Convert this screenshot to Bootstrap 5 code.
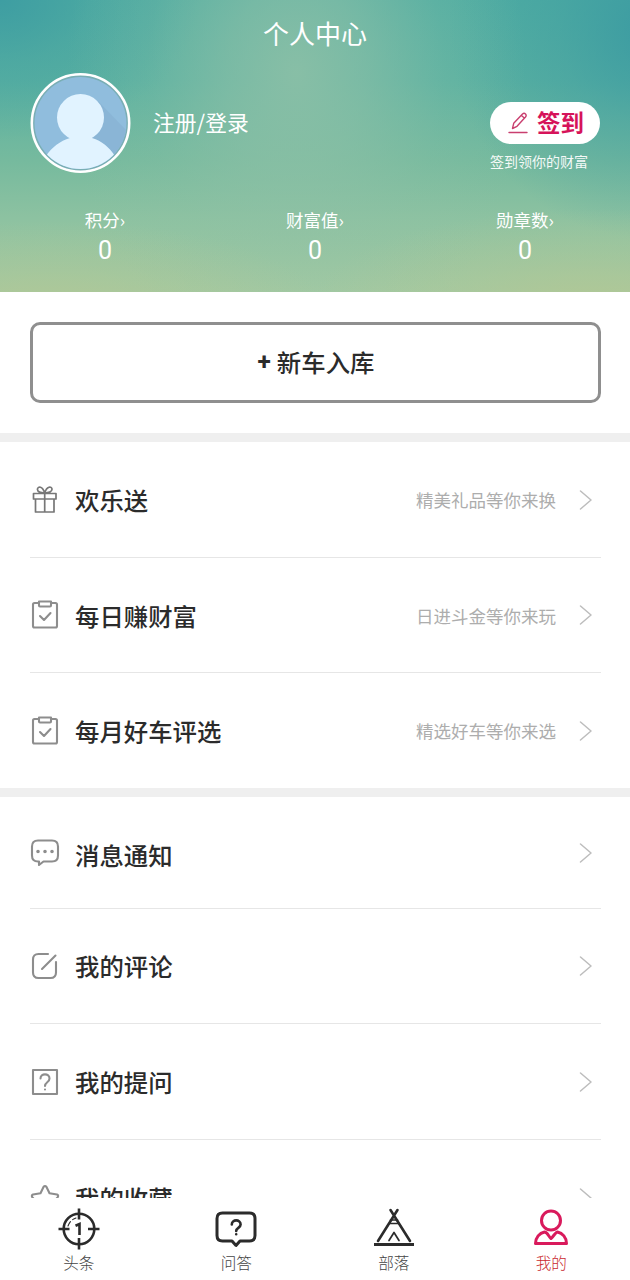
<!DOCTYPE html>
<html lang="zh-CN">
<head>
<meta charset="utf-8">
<meta name="viewport" content="width=device-width, initial-scale=1">
<title>个人中心</title>
<link href="https://cdn.jsdelivr.net/npm/bootstrap@5.3.0/dist/css/bootstrap.min.css" rel="stylesheet">
<style>
body{font-family:"Noto Sans CJK SC",sans-serif;color:#2b2b2b;line-height:1;background:#fff}
svg{display:block;fill:none;stroke-linecap:round;stroke-linejoin:round}
.app{height:1280px}
.hero{height:292px;padding:0 30px;
background:
radial-gradient(ellipse 280px 95px at 94% 104%,rgba(178,199,148,.85),rgba(178,199,148,.35) 50%,rgba(178,199,148,0)),
radial-gradient(ellipse 280px 95px at 8% 108%,rgba(178,199,148,.85),rgba(178,199,148,.35) 50%,rgba(178,199,148,0)),
radial-gradient(ellipse 230px 300px at 47% 25%,rgba(144,193,167,.85),rgba(144,193,167,.6) 30%,rgba(144,193,167,.2) 65%,rgba(144,193,167,0)),
radial-gradient(ellipse 200px 210px at 103% 10%,rgba(58,154,162,.9),rgba(58,154,162,.4) 45%,rgba(58,154,162,0)),
radial-gradient(ellipse 200px 140px at 0 0,rgba(60,156,162,.9),rgba(60,156,162,.35) 45%,rgba(60,156,162,0)),
linear-gradient(#50ada2 0%,#5ab1a1 28%,#76ba9e 55%,#8dc2a1 75%,#a3c9a2 100%)}
.hero-title{height:73px;font-size:26px;padding-top:20px}
.avatar{width:101px;height:101px}
.login{font-size:21.8px;margin-left:22px;padding-bottom:3px}
.sign{width:110px;height:101px;padding-top:29px}
.sign-btn{height:42px;border-radius:21px;color:#d6135a;font-size:23.5px;font-weight:700;padding-left:18px;gap:9px}
.sign-note{font-size:14px;margin-top:10px;opacity:.93}
.stats{margin:37px -30px 0}
.stats-name{font-size:17.5px;height:18px}
.stats-num{font-family:Roboto,sans-serif;font-size:25px;margin-top:9px}
.add-wrap{padding:30px 29px 30px 30px;height:141px}
.add-btn{height:81px;border:3px solid #8f8f8f;border-radius:10px;font-size:24.4px;font-weight:500;padding-left:1px}
.plus{font-family:Roboto,sans-serif;font-weight:700;margin-right:6px}
.gap-bar{height:9px;background:#efefef}
.rows{padding:0 29px 0 30px}
.item{height:115px;border-bottom:1px solid #e6e6e6}
.item:last-child{border-bottom:0}
.item-tall{height:116px}
.item-msg{height:112px}
.item-msg .item-name{top:3px}
.item-icon{width:30px;height:32px;stroke:#8d8d8d;stroke-width:2.1}
.item-name{font-size:24.4px;font-weight:500;margin-left:15px;position:relative;top:1px}
.rows-mine .item-name{top:.5px}
.rows-mine .item-msg .item-name{top:3px}
.item-note{font-size:17.5px;color:#adadad;margin-right:23px;padding-top:1px}
.arrow{width:13px;height:20px;stroke:#bdbdbd;stroke-width:1.5;margin-right:9px}
.tabs{height:82px;font-size:15.6px;font-weight:300;color:#444}
.tabs svg{width:44px;height:44px;stroke:#2b2b2b;stroke-width:2.6;margin-bottom:4px}
.tabs .col{padding-top:9px}
.tabs .on{color:#c92a30}
.tabs .on svg{stroke:#d91a5c;stroke-width:3}
</style>
</head>
<body>
<div class="app d-flex flex-column overflow-hidden">
<header class="hero text-white flex-shrink-0">
  <div class="hero-title text-center">个人中心</div>
  <div class="d-flex align-items-start">
    <svg class="avatar" viewBox="0 0 101 101">
      <defs><clipPath id="face"><circle cx="50.5" cy="50" r="46"/></clipPath></defs>
      <circle cx="50.5" cy="50" r="48.700" fill="#79aeb4" stroke="#fff" stroke-width="2.6"/>
      <g clip-path="url(#face)">
        <path fill="#90bddd" d="M0 0h101v101H0z"/>
        <path fill="#8ab5d6" d="M68 28 101 62v39H66L58 56z"/>
        <ellipse cx="50.5" cy="44.500" rx="23.500" ry="23.500" fill="#e1f3ff"/>
        <path fill="#e1f3ff" d="M40 60h22v5c10 3 17 9 23 18v18H16V83c6-9 14-15 24-18z"/>
      </g>
    </svg>
    <div class="login align-self-center">注册/登录</div>
    <div class="sign ms-auto">
      <div class="sign-btn bg-white d-flex align-items-center">
        <svg width="20" height="22" viewBox="0 0 20 22" stroke="#c93f6f" stroke-width="1.4"><path d="M1 20.500h18M4.500 16.500l1.200-5.200L14.500 2q1.600-1.300 3 0 1.300 1.400 0 3L9 14.300zM13.500 3.500l2.800 2.500"/></svg>
        <span>签到</span>
      </div>
      <div class="sign-note text-nowrap">签到领你的财富</div>
    </div>
  </div>
  <div class="stats row g-0 text-center">
    <div class="col"><div class="stats-name">积分›</div><div class="stats-num">0</div></div>
    <div class="col"><div class="stats-name">财富值›</div><div class="stats-num">0</div></div>
    <div class="col"><div class="stats-name">勋章数›</div><div class="stats-num">0</div></div>
  </div>
</header>
<main class="flex-grow-1 overflow-hidden">
  <div class="add-wrap"><div class="add-btn d-flex align-items-center justify-content-center"><span class="plus">+</span>新车入库</div></div>
  <div class="gap-bar"></div>
  <section class="rows">
    <div class="item item-tall d-flex align-items-center">
      <svg class="item-icon" viewBox="0 0 30 32"><path stroke-width="1.7" stroke="#777" d="M3.500 9.500h22.500v5.500H3.500zM5.500 15v13h18.500V15M14.700 10v18M14.700 9C11 9 7 8 7.500 5s5-3 7.200 4c2-7 7-7 7.300-4s-4 4-7.300 4"/></svg>
      <span class="item-name">欢乐送</span><span class="item-note ms-auto">精美礼品等你来换</span>
      <svg class="arrow" viewBox="0 0 13 20"><path d="M1.500 1 12 10 1.500 19"/></svg>
    </div>
    <div class="item d-flex align-items-center">
      <svg class="item-icon" viewBox="0 0 30 32"><path d="M9 4H4.500Q3 4 3 5.500V27q0 1.500 1.500 1.500h21Q27 28.500 27 27V5.500Q27 4 25.500 4H21M9 2.500h12v4q0 1-1 1H10q-1 0-1-1zM10 17l4 4 6.500-7"/></svg>
      <span class="item-name">每日赚财富</span><span class="item-note ms-auto">日进斗金等你来玩</span>
      <svg class="arrow" viewBox="0 0 13 20"><path d="M1.500 1 12 10 1.500 19"/></svg>
    </div>
    <div class="item d-flex align-items-center">
      <svg class="item-icon" viewBox="0 0 30 32"><path d="M9 4H4.500Q3 4 3 5.500V27q0 1.500 1.500 1.500h21Q27 28.500 27 27V5.500Q27 4 25.500 4H21M9 2.500h12v4q0 1-1 1H10q-1 0-1-1zM10 17l4 4 6.500-7"/></svg>
      <span class="item-name">每月好车评选</span><span class="item-note ms-auto">精选好车等你来选</span>
      <svg class="arrow" viewBox="0 0 13 20"><path d="M1.500 1 12 10 1.500 19"/></svg>
    </div>
  </section>
  <div class="gap-bar"></div>
  <section class="rows rows-mine">
    <div class="item item-msg d-flex align-items-center">
      <svg class="item-icon" viewBox="0 0 30 32"><path d="M8 3.500h14q6 0 6 6v9q0 6-6 6h-8.500L9 28V24.500H8q-6 0-6-6V9.500q0-6 6-6z"/><path stroke-width="3.600" d="M8 14.500h.01M15 14.500h.01M22 14.500h.01"/></svg>
      <span class="item-name">消息通知</span>
      <svg class="arrow ms-auto" viewBox="0 0 13 20"><path d="M1.500 1 12 10 1.500 19"/></svg>
    </div>
    <div class="item d-flex align-items-center">
      <svg class="item-icon" viewBox="0 0 30 32"><path d="M18 4H8.500Q3 4 3 9.500v13Q3 28 8.500 28h12q5.500 0 5.500-5.500V12M12 19 25.500 5.500"/></svg>
      <span class="item-name">我的评论</span>
      <svg class="arrow ms-auto" viewBox="0 0 13 20"><path d="M1.500 1 12 10 1.500 19"/></svg>
    </div>
    <div class="item item-tall d-flex align-items-center">
      <svg class="item-icon" viewBox="0 0 30 32"><path d="M3 4h24v24H3z"/><path d="M10.500 12.500c0-5.500 9-5.500 9 0 0 4-4.500 3.500-4.500 7.500M15 23.500v.01"/></svg>
      <span class="item-name">我的提问</span>
      <svg class="arrow ms-auto" viewBox="0 0 13 20"><path d="M1.500 1 12 10 1.500 19"/></svg>
    </div>
    <div class="item d-flex align-items-center">
      <svg class="item-icon" viewBox="0 0 30 32"><path d="M13.500 5q1.500-2 3 0l3 6.200 7.500 1.300q2 1 .5 3L22.500 21l1 7.500q-.5 2-2.500 1.200L15 26.500l-6 3.200q-2 .8-2.500-1.200l1-7.500-5-5.500q-1.500-2 .5-3l7.500-1.300z"/></svg>
      <span class="item-name">我的收藏</span>
      <svg class="arrow ms-auto" viewBox="0 0 13 20"><path d="M1.500 1 12 10 1.500 19"/></svg>
    </div>
  </section>
</main>
<nav class="tabs row g-0 text-center bg-white flex-shrink-0">
  <div class="col d-flex flex-column align-items-center">
    <svg viewBox="0 0 44 44"><circle cx="22" cy="22" r="15.300"/><path stroke-linecap="butt" d="M22 1.500v11M22 31v11.500M1.500 22h11M31 22h11.500"/><path stroke-width="1.100" stroke-dasharray="5 3" d="M11 19q2-6 8-8"/><path stroke-linecap="butt" stroke-linejoin="miter" stroke-width="2.600" d="M18.500 18.800 22.500 17V28"/></svg>
    <span>头条</span></div>
  <div class="col d-flex flex-column align-items-center">
    <svg viewBox="0 0 44 44"><path stroke-width="3" d="M8.500 6h27q5.500 0 5.500 5.500v17q0 5.500-5.500 5.500H26l-4 4.500-4-4.500H8.500Q3 34 3 28.500v-17Q3 6 8.500 6z"/><path d="M17.800 17.500c0-5.500 8.800-5.500 8.800 0 0 3.500-4.400 3.200-4.400 6.500M22.200 27.300v.01"/></svg>
    <span>问答</span></div>
  <div class="col d-flex flex-column align-items-center">
    <svg viewBox="0 0 44 44"><path stroke-width="3.200" stroke-linecap="butt" d="M2 37.500h40"/><path d="M6 34 25.500 3M38 34 18.500 3"/><path stroke-width="1.700" d="M18.500 13h7M17.500 16.500h9M17 33.500l5-8 5 8"/></svg>
    <span>部落</span></div>
  <div class="col on d-flex flex-column align-items-center">
    <svg viewBox="0 0 44 44"><circle cx="22" cy="13.500" r="9.500"/><path d="M6.500 36.500h31c0-6-4-10.500-9-11.500-2 0-4 4.500-6.500 6.500-2.500-2-3.500-6.500-6.500-6.500-5 1-9 5.500-9 11.500z"/></svg>
    <span>我的</span></div>
</nav>
</div>
<script src="https://cdn.jsdelivr.net/npm/bootstrap@5.3.0/dist/js/bootstrap.bundle.min.js"></script>
</body>
</html>
